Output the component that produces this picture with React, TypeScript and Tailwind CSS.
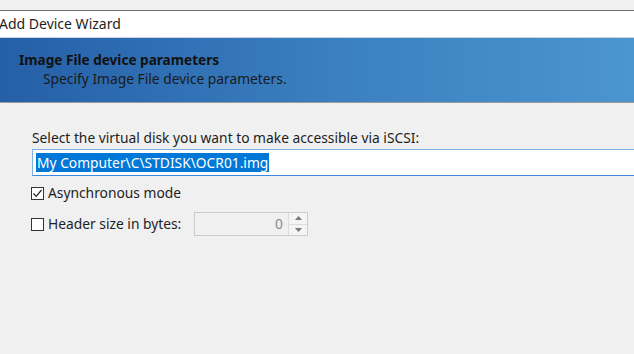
const font = { fontFamily: '"Noto Sans", "Noto Sans CJK SC", sans-serif' };

function Check({ checked }: { checked: boolean }) {
  return (
    <span className="w-[13px] h-[13px] border border-[#333333] bg-white flex items-center justify-center shrink-0">
      {checked && (
        <svg width="11" height="11" viewBox="0 0 11 11">
          <path d="M1.5 5.5 L4.2 8.3 L9.5 2" fill="none" stroke="#222" strokeWidth="1.2" />
        </svg>
      )}
    </span>
  );
}

export default function App() {
  return (
    <div className="w-[634px] h-[354px] bg-[#f0f0f0] overflow-hidden text-[13.8px] text-[#1e1e1e]" style={font}>
      <div className="h-[11px] border-b border-[#6e6e6e]" />
      <div className="h-[27px] bg-white border-b border-[#c8d4e2] flex items-center pl-0 leading-none">
        <span className="text-[14px] -ml-[1px]">Add Device Wizard</span>
      </div>
      <div className="h-[65px] bg-gradient-to-r from-[#255fa7] via-[#3a7ebf] to-[#4b95d0] border-b border-[#9a9a9a] pl-[19px] pt-[12px] leading-[19px]">
        <div className="font-bold text-[13.6px] text-[#111]">Image File device parameters</div>
        <div className="pl-[24px] text-[#1a1a1a]">Specify Image File device parameters.</div>
      </div>

      <div className="pl-[32px] pt-[26px]">
        <div className="leading-[18px]">Select the virtual disk you want to make accessible via iSCSI:</div>
        <div className="mt-[2px] h-[27px] w-[620px] bg-white border border-[#7fb1e6] border-b-[#3e88dc] flex items-center pl-[3px]">
          <span className="bg-[#0078d7] text-white leading-[19px] px-[1px]">My Computer\C\STDISK\OCR01.img</span>
        </div>

        <label className="mt-[10px] flex items-center gap-[4px] -ml-[1px] h-[14px]">
          <Check checked />
          <span>Asynchronous mode</span>
        </label>

        <div className="mt-[12px] flex items-center -ml-[1px]">
          <label className="flex items-center gap-[4px] w-[163px]">
            <Check checked={false} />
            <span>Header size in bytes:</span>
          </label>
          <div className="w-[114px] h-[24px] border border-[#cccccc] bg-[#f0f0f0] flex">
            <div className="flex-1 text-right pr-[5px] text-[#8a8a8a] leading-[22px]">0</div>
            <div className="w-[19px] flex flex-col border-l border-[#dcdcdc]">
              <div className="flex-1 flex items-center justify-center border-b border-[#dcdcdc] bg-[#f4f4f4]">
                <svg width="7" height="4" viewBox="0 0 7 4"><path d="M0 4 L3.5 0 L7 4 Z" fill="#777" /></svg>
              </div>
              <div className="flex-1 flex items-center justify-center bg-[#f4f4f4]">
                <svg width="7" height="4" viewBox="0 0 7 4"><path d="M0 0 L3.5 4 L7 0 Z" fill="#777" /></svg>
              </div>
            </div>
          </div>
        </div>
      </div>
    </div>
  );
}
